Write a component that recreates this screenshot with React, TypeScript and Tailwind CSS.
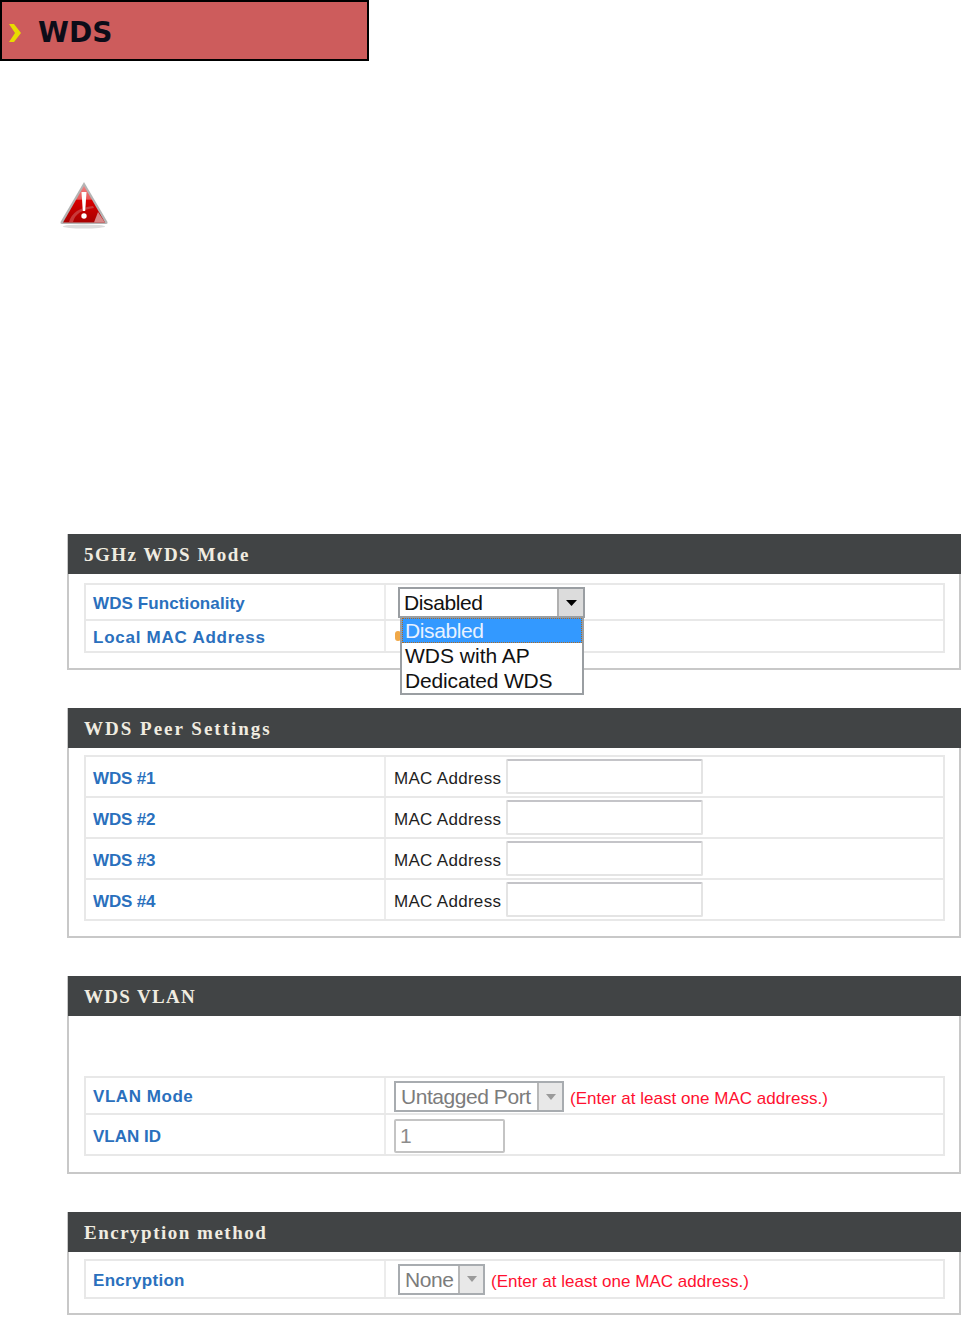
import React from "react";

const SANS = "font-['Liberation_Sans',Arial,sans-serif]";

function Panel({
  title,
  tracking = "tracking-[1.5px]",
  className,
  children,
}: {
  title: string;
  tracking?: string;
  className?: string;
  children: React.ReactNode;
}) {
  return (
    <section className={`border-x-2 border-b-2 border-[#c8c8c8] ${className}`}>
      <h2
        className={`-mr-[2px] -ml-px flex h-10 items-center bg-[#414445] pt-[2px] pl-[16px] font-['Liberation_Serif',serif] text-[19px] font-bold text-[#f0ece0] ${tracking}`}
      >
        {title}
      </h2>
      {children}
    </section>
  );
}

function Table({ children }: { children: React.ReactNode }) {
  return (
    <div className="mr-[14px] ml-[15px] divide-y-2 divide-[#e8e8e8] border-2 border-[#e8e8e8]">
      {children}
    </div>
  );
}

function Row({
  label,
  height,
  tracking = "",
  labelPad = "pt-[3px]",
  children,
}: {
  label: string;
  height: string;
  tracking?: string;
  labelPad?: string;
  children?: React.ReactNode;
}) {
  return (
    <div className={`flex ${height}`}>
      <div
        className={`flex w-[300px] shrink-0 items-center border-r-2 border-[#ececec] pl-[7px] text-[17px] font-bold text-[#2a70bd] ${labelPad} ${tracking}`}
      >
        {label}
      </div>
      <div className="relative flex min-w-0 flex-1 items-center pl-[8px]">{children}</div>
    </div>
  );
}

function MacRow({ n, height }: { n: number; height: string }) {
  return (
    <Row label={`WDS #${n}`} height={height} tracking="tracking-[-0.15px]" labelPad="pt-[4px]">
      <span className="pt-[5px] text-[17px] tracking-[0.3px] text-[#1e1e1e]">MAC Address</span>
      <div className="ml-[5px] h-[35px] w-[197px] rounded-[2px] border-2 border-[#e4e4e4] border-t-[#c4c4c8]" />
    </Row>
  );
}

function DisabledSelect({
  text,
  width,
  className = "",
}: {
  text: string;
  width: string;
  className?: string;
}) {
  return (
    <div className={`flex h-[31px] shrink-0 border-2 border-[#a8acb0] bg-white ${width} ${className}`}>
      <span className="flex-1 pl-[5px] text-[21px] leading-[27px] tracking-[-0.45px] whitespace-nowrap text-[#7c7c7c]">
        {text}
      </span>
      <span className="flex w-[25px] items-center justify-center border-l-2 border-[#b8b8b8] bg-[#e8e8e8]">
        <svg width="10" height="6" viewBox="0 0 10 6">
          <path d="M0 0h10L5 6z" fill="#9a9a9a" />
        </svg>
      </span>
    </div>
  );
}

function Hint({ pad }: { pad: string }) {
  return (
    <span className={`ml-[6px] text-[17px] tracking-[0.03px] whitespace-nowrap text-[#ff1030] ${pad}`}>
      (Enter at least one MAC address.)
    </span>
  );
}

function Warning() {
  return (
    <svg width="48" height="48" viewBox="0 0 48 48" className="block">
      <defs>
        <linearGradient id="warn" x1="0" y1="0" x2="0" y2="1">
          <stop offset="0" stopColor="#f08080" />
          <stop offset="0.36" stopColor="#e85858" />
          <stop offset="0.39" stopColor="#d80000" />
          <stop offset="1" stopColor="#a80000" />
        </linearGradient>
      </defs>
      <ellipse cx="24" cy="45.5" rx="21" ry="2" fill="#dcdcdc" />
      <path d="M24 1 L47.500 41 Q48 43 46 43 H2 Q0 43 .5 41 Z" fill="#b4b4b4" />
      <path d="M24 5 L45 41.500 H3 Z" fill="url(#warn)" />
      <path d="M9 41 Q13 27 33 25 L34 27 Q16 29 13 41 Z" fill="#c83838" />
      <path d="M34 41.500 L38 31 L45 41.500 Z" fill="#d88888" />
      <path d="M21.500 11 H26.500 L25.200 30 H22.800 Z" fill="#fff" />
      <circle cx="24" cy="35" r="2.700" fill="#fff" />
    </svg>
  );
}

export default function App() {
  return (
    <div className={`min-h-[1324px] bg-white ${SANS}`}>
      <div className="flex h-[61px] w-[369px] items-center border-2 border-black bg-[#cd5c5c] pt-[5px] pl-[5px]">
        <svg width="16" height="20" viewBox="0 0 16 20">
          <path d="M2 1h5l7 9-7 9H2l6-9z" fill="#e8dc00" />
        </svg>
        <span className="ml-[15px] font-['DejaVu_Sans',sans-serif] text-[28px] font-bold text-[#0c0c18]">
          WDS
        </span>
      </div>

      <div className="mt-[120px] ml-[60px]">
        <Warning />
      </div>

      <div className="mt-[305px] mr-[10px] ml-[67px]">
        <Panel title="5GHz WDS Mode" className="pb-[15px]">
          <div className="pt-[9px]">
            <Table>
              <Row label="WDS Functionality" height="h-[36px]" tracking="tracking-[0.1px]">
                <div className="absolute top-[2px] left-[12px] z-10 w-[187px]">
                  <div className="flex h-[31px] border-2 border-[#9a9ea2] bg-white">
                    <span className="flex-1 pl-[4px] text-[21px] leading-[27px] tracking-[-0.4px] text-[#111]">
                      Disabled
                    </span>
                    <span className="flex w-[26px] items-center justify-center border-l-2 border-[#b0b0b0] bg-[#dcdcdc]">
                      <svg width="11" height="6" viewBox="0 0 11 6">
                        <path d="M0 0h11L5.500 6z" fill="#000" />
                      </svg>
                    </span>
                  </div>
                  <div className="ml-[2px] w-[184px] border-2 border-t-0 border-[#9a9ea2] bg-white text-[21px] leading-[25px] text-[#111]">
                    <div className="bg-[#3399ff] pl-[3px] tracking-[-0.4px] text-[#e8f2ff] outline-1 -outline-offset-1 outline-[#b06a20] outline-dotted">
                      Disabled
                    </div>
                    <div className="pl-[3px]">WDS with AP</div>
                    <div className="pl-[3px] tracking-[-0.15px]">Dedicated WDS</div>
                  </div>
                </div>
              </Row>
              <Row label="Local MAC Address" height="h-[30px]" tracking="tracking-[0.75px]">
                <span className="ml-[1px] h-[10px] w-[6px] rounded-full bg-[#f0a848]" />
              </Row>
            </Table>
          </div>
        </Panel>

        <Panel title="WDS Peer Settings" tracking="tracking-[2px]" className="mt-[38px] pb-[15px]">
          <div className="pt-[7px]">
            <Table>
              <MacRow n={1} height="h-[41px]" />
              <MacRow n={2} height="h-[41px]" />
              <MacRow n={3} height="h-[41px]" />
              <MacRow n={4} height="h-[39px]" />
            </Table>
          </div>
        </Panel>

        <Panel title="WDS VLAN" tracking="tracking-[1.3px]" className="mt-[38px] pb-[16px]">
          <div className="pt-[60px]">
            <Table>
              <Row label="VLAN Mode" height="h-[37px]" tracking="tracking-[0.55px]">
                <DisabledSelect text="Untagged Port" width="w-[170px]" className="mt-[2px]" />
                <Hint pad="pt-[7px]" />
              </Row>
              <Row label="VLAN ID" height="h-[39px]" labelPad="pt-[4px]">
                <div className="mt-[2px] h-[34px] w-[111px] rounded-[2px] border-2 border-[#c4c4c4] pl-[4px] text-[21px] leading-[30px] text-[#8c8c8c]">
                  1
                </div>
              </Row>
            </Table>
          </div>
        </Panel>

        <Panel title="Encryption method" className="mt-[38px] pb-[14px]">
          <div className="pt-[7px]">
            <Table>
              <Row label="Encryption" height="h-[36px]" tracking="tracking-[0.3px]">
                <DisabledSelect text="None" width="w-[87px]" className="ml-[4px]" />
                <Hint pad="pt-[5px]" />
              </Row>
            </Table>
          </div>
        </Panel>
      </div>
    </div>
  );
}
